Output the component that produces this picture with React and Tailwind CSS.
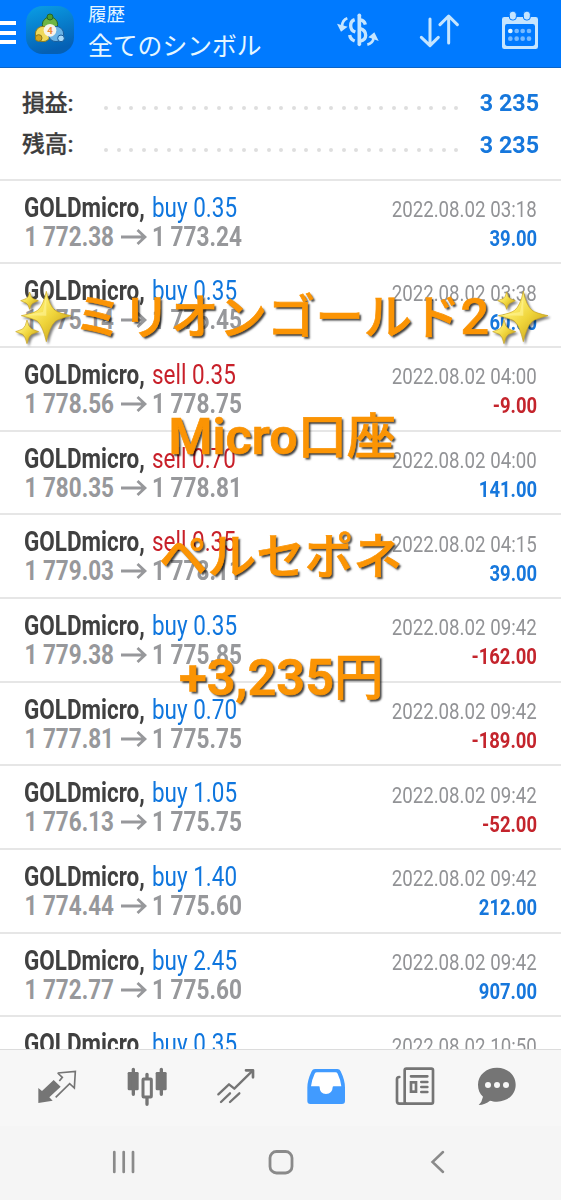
import clsx from "clsx";

const deals = [
  { type: "buy", lot: "0.35", open: "1 772.38", close: "1 773.24", time: "2022.08.02 03:18", profit: "39.00" },
  { type: "buy", lot: "0.35", open: "1 775.14", close: "1 776.45", time: "2022.08.02 03:38", profit: "60.00" },
  { type: "sell", lot: "0.35", open: "1 778.56", close: "1 778.75", time: "2022.08.02 04:00", profit: "-9.00" },
  { type: "sell", lot: "0.70", open: "1 780.35", close: "1 778.81", time: "2022.08.02 04:00", profit: "141.00" },
  { type: "sell", lot: "0.35", open: "1 779.03", close: "1 778.11", time: "2022.08.02 04:15", profit: "39.00" },
  { type: "buy", lot: "0.35", open: "1 779.38", close: "1 775.85", time: "2022.08.02 09:42", profit: "-162.00" },
  { type: "buy", lot: "0.70", open: "1 777.81", close: "1 775.75", time: "2022.08.02 09:42", profit: "-189.00" },
  { type: "buy", lot: "1.05", open: "1 776.13", close: "1 775.75", time: "2022.08.02 09:42", profit: "-52.00" },
  { type: "buy", lot: "1.40", open: "1 774.44", close: "1 775.60", time: "2022.08.02 09:42", profit: "212.00" },
  { type: "buy", lot: "2.45", open: "1 772.77", close: "1 775.60", time: "2022.08.02 09:42", profit: "907.00" },
  { type: "buy", lot: "0.35", open: "", close: "", time: "2022.08.02 10:50", profit: "" },
];

const summary = [
  { label: "損益:", value: "3 235" },
  { label: "残高:", value: "3 235" },
];

function AppLogo() {
  return (
    <svg className="ml-[10px] h-12 w-12 shrink-0" viewBox="0 0 144 144">
      <defs>
        <linearGradient id="tile" x1="0" y1="0" x2="0.3" y2="1">
          <stop offset="0" stopColor="#0a9fe6" />
          <stop offset="1" stopColor="#0560b4" />
        </linearGradient>
      </defs>
      <rect width="144" height="144" rx="50" fill="url(#tile)" />
      <g strokeWidth="3">
        <circle cx="72" cy="56" r="23" fill="#6fb544" stroke="#23652c" />
        <circle cx="72" cy="33" r="9" fill="#4c9c2e" stroke="#23652c" />
        <circle cx="51" cy="84" r="23" fill="#efd95a" stroke="#8d7a1d" />
        <circle cx="38" cy="96" r="10" fill="#d3a51d" stroke="#8d7a1d" />
        <circle cx="90" cy="84" r="23" fill="#6cb4e6" stroke="#195c9a" />
        <circle cx="105" cy="97" r="10" fill="#a8dafa" stroke="#195c9a" />
      </g>
      <circle cx="72" cy="73" r="19" fill="#f6f3ea" />
      <text x="72" y="84" textAnchor="middle" fontSize="29" fontWeight="700" fill="#ee8a35" fontFamily="Roboto, sans-serif">
        4
      </text>
    </svg>
  );
}

function Header() {
  return (
    <header className="flex h-[68px] shrink-0 border-b border-[#0a64c8] bg-[#007aff] pt-[6px] text-[#e6f7ff]">
      <div className="mt-[15px] flex w-4 flex-col gap-[5.5px]">
        <span className="h-1 bg-white" />
        <span className="h-1 bg-white" />
        <span className="h-1 bg-white" />
      </div>
      <AppLogo />
      <div className="ml-[14px] w-[200px] whitespace-nowrap">
        <p className="-mt-[2px] text-[18.6px] leading-[23px]">履歴</p>
        <p className="mt-[2px] text-[24.8px] leading-[36px]">全てのシンボル</p>
      </div>
      <HeaderIcons />
    </header>
  );
}

function HeaderIcons() {
  return (
    <div className="ml-[48px] mt-[4px] flex text-[#c5e5ff]">
      {/* currency exchange */}
      <svg className="h-10 w-[44px]" viewBox="110 30 132 120" fill="none" stroke="currentColor">
        <path d="M180 46V133" strokeWidth="11" strokeLinecap="round" />
        <path d="M183 60Q195 61 198 74M183 86Q199 91 199 106T183 123" strokeWidth="10" />
        <path d="M166 59Q154 63 154 77T168 96M151 105Q153 118 166 123" strokeWidth="10" />
        <path d="M144 55Q129 60 128 79" strokeWidth="8" />
        <path d="M113 71L145 80L125 95Z" fill="currentColor" stroke="none" />
        <path d="M204 134Q221 130 223 113" strokeWidth="8" />
        <path d="M207 112L225 97L238 123Z" fill="currentColor" stroke="none" />
      </svg>
      <svg className="ml-[39px] h-10 w-[40px]" viewBox="358 30 120 120" fill="none" stroke="currentColor" strokeWidth="9" strokeLinecap="round" strokeLinejoin="round">
        <path d="M391 57V135M365 112L391 137L416 112" />
        <path d="M447 129V49M421 74L447 48L473 74" />
      </svg>
      <svg className="ml-[41px] h-10 w-[40px]" viewBox="603 30 120 120">
        <path fill="currentColor" fillRule="evenodd" d="M616 51H710Q717 51 717 58V140Q717 147 710 147H616Q609 147 609 140V58Q609 51 616 51ZM624 72Q618 72 618 79V130Q618 138 625 138H700Q708 138 708 130V79Q708 72 701 72Z" />
        <g fill="#c5e5ff" stroke="#007aff" strokeWidth="3">
          <rect x="631" y="34" width="21" height="26" rx="9" />
          <rect x="673" y="34" width="21" height="26" rx="9" />
        </g>
        <circle cx="634" cy="93" r="7" fill="#e6f7ff" />
        <g fill="#76b9ff">
          <circle cx="653" cy="93" r="7" />
          <circle cx="671" cy="93" r="7" />
          <circle cx="690" cy="93" r="7" />
          <circle cx="634" cy="116" r="7" />
          <circle cx="653" cy="116" r="7" />
          <circle cx="671" cy="116" r="7" />
          <circle cx="690" cy="116" r="7" />
        </g>
      </svg>
    </div>
  );
}

function SummaryRow({ label, value }) {
  return (
    <div className="flex h-[41.7px] items-center pl-[22px] pr-[22px]">
      <span className="mt-[2px] w-[82px] text-[22.8px] font-medium text-[#3c3c3c] [-webkit-text-stroke:0.3px]">{label}</span>
      <div className="mt-[10px] flex w-[354px] justify-between">
        {Array.from({ length: 29 }, (_, i) => (
          <span key={i} className="h-[4px] w-[4px] rounded-full bg-[#dedede]" />
        ))}
      </div>
      <span className="ml-auto origin-right scale-x-[0.97] text-[24px] font-bold text-[#1677dc]">{value}</span>
    </div>
  );
}

function DealRow({ deal }) {
  return (
    <div className="flex h-[83.67px] shrink-0 justify-between border-t-2 border-[#e6e6e6] pl-6 pr-6 whitespace-nowrap">
      <div className="w-[230px] pt-[13px] text-[27px] leading-[29px]">
        <div className="flex">
          <span className="w-[128px] origin-left scale-x-[0.832] font-bold text-[#404040]">GOLDmicro,</span>
          <span className={clsx("origin-left scale-x-[0.832]", deal.type === "buy" ? "text-[#0f76de]" : "text-[#c8202a]")}>
            {deal.type} {deal.lot}
          </span>
        </div>
        {deal.open && (
          <div className="flex font-bold text-[#97989b]">
            <span className="w-[97px] shrink-0 origin-left translate-x-[0.5px] scale-x-[0.832]">{deal.open}</span>
            <svg className="mt-[5px] h-[18px] w-[26px] shrink-0" viewBox="0 0 26 18" fill="none" stroke="currentColor" strokeWidth="2.8">
              <path d="M0 9H24M16.5 2L24 9L16.5 16" />
            </svg>
            <span className="ml-[5px] origin-left scale-x-[0.838]">{deal.close}</span>
          </div>
        )}
      </div>
      <div className="flex flex-col items-end pt-[14.5px] text-[22.5px] leading-[29px]">
        <span className="origin-right scale-x-[0.83] text-[#929396]">{deal.time}</span>
        <span className={clsx("origin-right scale-x-[0.82] font-bold", deal.profit.startsWith("-") ? "text-[#c4242c]" : "text-[#1677dc]")}>
          {deal.profit}
        </span>
      </div>
    </div>
  );
}

function Sparkles({ className }) {
  return (
    <svg className={clsx("h-[54px] w-[57.3px] shrink-0 drop-shadow-[2px_2px_1px_rgba(0,0,0,0.5)]", className)} viewBox="44 88 172 162">
      <defs>
        <linearGradient id="gold" x1="0" y1="0" x2="1" y2="1">
          <stop offset="0.25" stopColor="#fff176" />
          <stop offset="0.55" stopColor="#efd43a" />
          <stop offset="1" stopColor="#b98f10" />
        </linearGradient>
      </defs>
      <g fill="url(#gold)" stroke="#c9a31c" strokeWidth="2" strokeLinejoin="round">
        <path d="M138 92Q147 135 164 149Q176 158 212 165Q176 174 165 182Q148 198 138 243Q128 198 112 182Q100 174 63 165Q100 158 112 149Q129 135 138 92Z" />
        <path d="M88 94Q92 111 99 114L114 120L99 127Q92 130 88 146Q84 130 77 127L61 120L77 114Q84 111 88 94Z" />
        <path d="M80 178Q84 198 94 205L115 213L94 221Q85 227 80 249Q75 227 67 221L46 213L67 205Q76 198 80 178Z" />
      </g>
      <path d="M138 105L128 154L74 164L138 165Z" fill="#fff59a" opacity="0.6" />
    </svg>
  );
}

function Caption() {
  return (
    <div className="absolute inset-x-0 top-[257px] text-[48.6px] font-medium leading-[120.3px] whitespace-nowrap text-[#fb9404] [-webkit-text-stroke:0.7px_#fb9404] [text-shadow:2px_2px_2px_rgba(0,0,0,0.75)]">
      <div className="flex h-[120.3px] items-center">
        <Sparkles className="ml-[14.7px]" />
        <span className="ml-[2px] w-[418.4px] text-[48.3px]">
          ミリオンゴールド<span className="text-[50.3px]">2</span>
        </span>
        <Sparkles />
      </div>
      <p className="h-[120.3px] pl-[168.5px]">
        <span className="text-[50.3px] font-semibold">Micro</span>
        <span className="text-[49.2px]">口座</span>
      </p>
      <p className="h-[120.3px] pl-[159px]">ペルセポネ</p>
      <p className="h-[120.3px] pl-[179px]">
        <span className="text-[50.5px] font-semibold">+3,235</span>
        <span className="text-[49.5px]">円</span>
      </p>
    </div>
  );
}

function TabBar() {
  return (
    <nav className="flex h-[77px] shrink-0 gap-[47.6px] border-t border-[#dcdcdc] bg-[#f7f7f7] pl-9 pt-4 text-[#757575]">
      {/* quotes */}
      <svg className="h-[42px] w-[42px]" viewBox="108 168 126 126">
        <path fill="currentColor" d="M161 210L182 230L148 262L158 272L115 279V234L126 243Z" />
        <path d="M173 189L226 184L223 234L209 221L167 262M173 189L187 202L178 213" fill="none" stroke="currentColor" strokeWidth="5" />
      </svg>
      {/* charts */}
      <svg className="h-[42px] w-[42px]" viewBox="375 168 126 126">
        <g fill="currentColor">
          <rect x="380" y="186" width="33" height="55" rx="4" />
          <rect x="464" y="186" width="33" height="55" rx="4" />
        </g>
        <g fill="none" stroke="currentColor" strokeWidth="10" strokeLinecap="round">
          <path d="M397 178V253M481 178V253M438 193V205M438 265V283" />
        </g>
        <rect x="426" y="207" width="25" height="54" rx="2" fill="none" stroke="currentColor" strokeWidth="9" />
      </svg>
      {/* trade */}
      <svg className="h-[42px] w-[42px]" viewBox="645 168 126 126" fill="none" stroke="currentColor" strokeWidth="7" strokeLinecap="round" strokeLinejoin="round">
        <path d="M655 253L687 223L703 236L755 185" />
        <path d="M738 181H759V202" strokeWidth="8" />
        <path d="M663 276L690 250M690 276L718 250" />
      </svg>
      {/* history */}
      <svg className="h-[42px] w-[42px]" viewBox="70 168 126 126">
        <path fill="#419bff" d="M100 177H167Q174 177 177 184Q190 211 190 233V273Q190 282 181 282H86Q77 282 77 273V233Q77 211 90 184Q93 177 100 177Z" />
        <path fill="#ffffff" d="M106 187H161Q166 187 168 191Q176 207 179 229H156Q153 229 153 232Q152 252 133 252T114 232Q114 229 112 229H88Q91 207 99 191Q101 187 106 187Z" />
      </svg>
      {/* news */}
      <svg className="h-[42px] w-[42px]" viewBox="341 168 126 126" fill="none" stroke="currentColor" strokeWidth="8" strokeLinecap="round">
        <rect x="373" y="176" width="85" height="105" rx="5" />
        <path d="M357 201Q350 201 350 208V274Q350 281 357 281H376M392 199H441M423 216H441M423 231H441M423 246H441" />
        <rect x="392" y="217" width="15" height="28" />
      </svg>
      {/* chat */}
      <svg className="-ml-2 h-[42px] w-[42px]" viewBox="587 168 126 126">
        <path fill="currentColor" d="M650 173C682 173 706 195 706 224S682 275 650 275C641 275 635 273 629 272Q615 284 595 285Q605 276 608 260C598 251 593 239 593 224C593 195 618 173 650 173Z" />
        <g fill="#f7f7f7">
          <circle cx="623" cy="225" r="9" />
          <circle cx="650" cy="225" r="9" />
          <circle cx="677" cy="225" r="9" />
        </g>
      </svg>
    </nav>
  );
}

function SystemBar() {
  return (
    <div className="flex h-[74px] shrink-0 bg-[#f5f5f5] pt-[23px]">
      <svg className="ml-[110px] h-[26px] w-[27px]" viewBox="0 0 27 26" stroke="#8a8a8a" strokeWidth="2.7" strokeLinecap="round">
        <path d="M4.3 3V23M13.7 3V23M23 3V23" />
      </svg>
      <svg className="ml-[130px] h-[26px] w-[28px]" viewBox="0 0 28 26" fill="none" stroke="#8a8a8a" strokeWidth="2.8">
        <rect x="3" y="2.5" width="22" height="21.5" rx="6.5" />
      </svg>
      <svg className="ml-[134px] h-[26px] w-[18px]" viewBox="0 0 18 26" fill="none" stroke="#8a8a8a" strokeWidth="2.5" strokeLinecap="round">
        <path d="M14 3L3.5 13L14 23" />
      </svg>
    </div>
  );
}

export default function App() {
  return (
    <div className="relative flex h-[1200px] w-[561px] flex-col overflow-hidden bg-white font-[Roboto,'Noto_Sans_CJK_JP',sans-serif]">
      <Header />
      <section className="h-[110.6px] shrink-0 pt-[14px]">
        {summary.map((s) => (
          <SummaryRow key={s.label} label={s.label} value={s.value} />
        ))}
      </section>
      <main className="flex min-h-0 flex-1 flex-col overflow-hidden">
        {deals.map((d, i) => (
          <DealRow key={i} deal={d} />
        ))}
      </main>
      <TabBar />
      <SystemBar />
      <Caption />
    </div>
  );
}
